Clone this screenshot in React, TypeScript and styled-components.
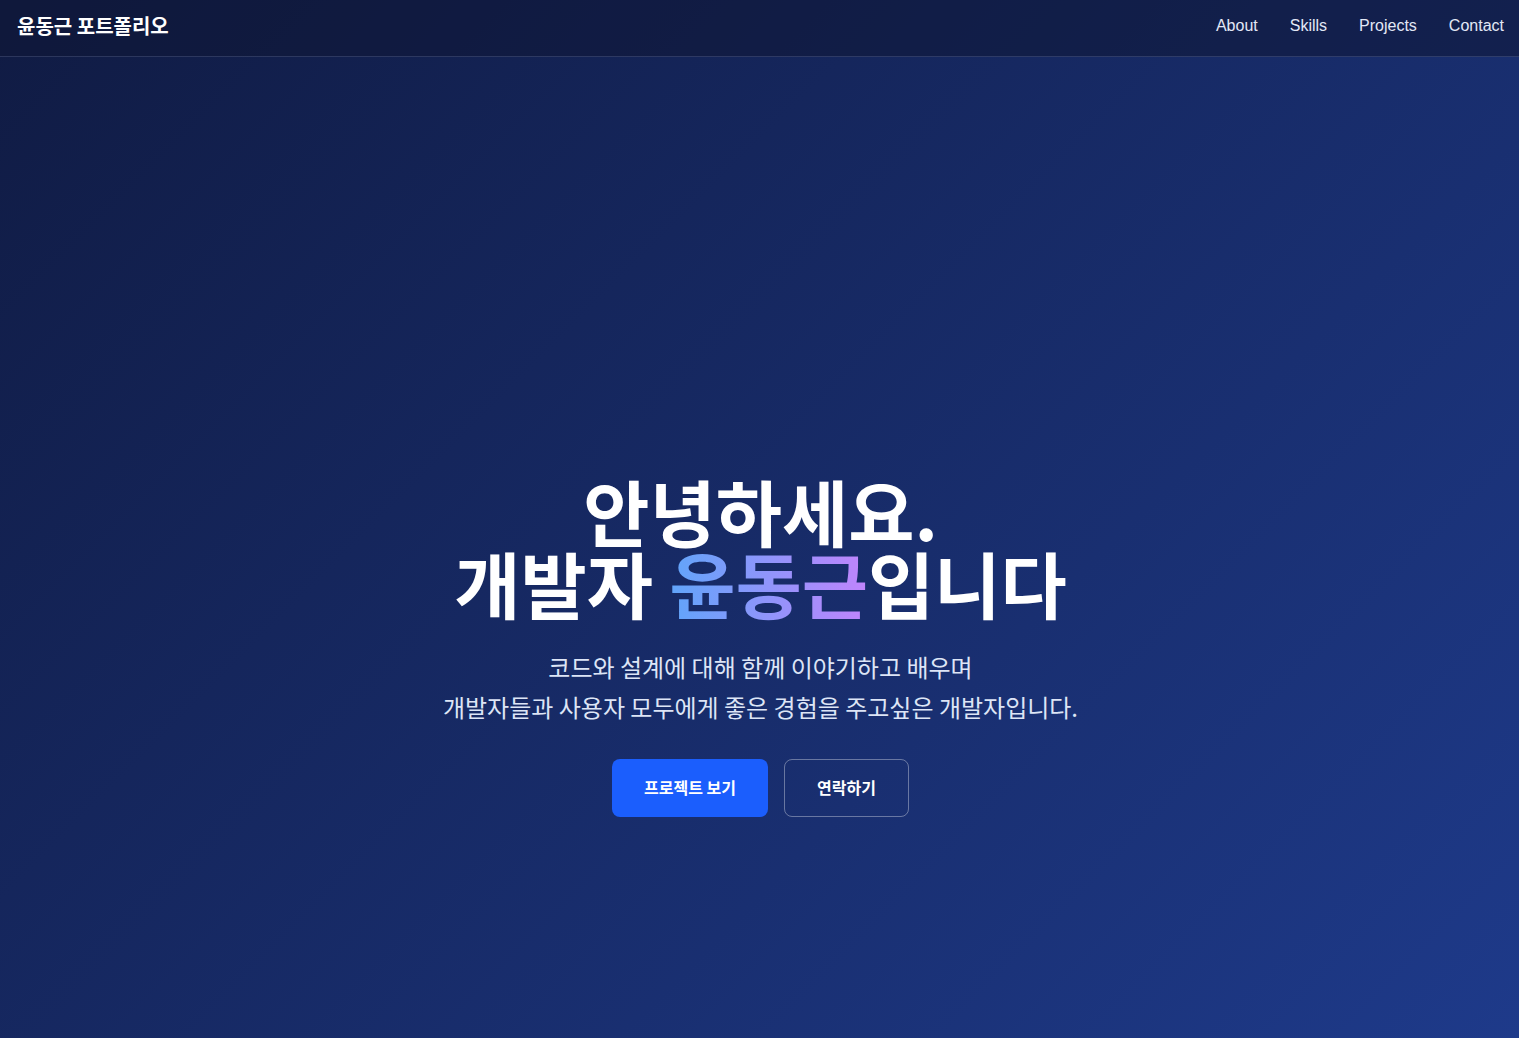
import React from "react";
import styled, { createGlobalStyle } from "styled-components";

const GlobalStyle = createGlobalStyle`
  html, body {
    margin: 0;
    padding: 0;
  }
  body {
    font-family: "Noto Sans CJK KR", "Noto Sans", sans-serif;
    background: #111c45;
  }
  * { box-sizing: border-box; }
`;

const Page = styled.div`
  min-height: 100vh;
  background: linear-gradient(135deg, #101b43 0%, #1e3a8a 100%);
  display: flex;
  flex-direction: column;
`;

const Header = styled.header`
  height: 57px;
  display: flex;
  align-items: center;
  justify-content: space-between;
  padding: 0 15px 5px 17px;
  background: rgba(14, 22, 52, 0.55);
  border-bottom: 1px solid rgba(148, 163, 210, 0.22);
`;

const Logo = styled.div`
  font-family: "Noto Sans CJK KR", sans-serif;
  font-weight: 700;
  font-size: 20px;
  color: #ffffff;
`;

const Nav = styled.nav`
  display: flex;
  gap: 32px;
`;

const NavLink = styled.a`
  font-family: "Liberation Sans", Arial, sans-serif;
  font-size: 16px;
  color: #e3e8f6;
  text-decoration: none;
  cursor: pointer;
`;

const Hero = styled.section`
  flex: 1;
  display: flex;
  flex-direction: column;
  align-items: center;
  padding-top: 417px;
  padding-left: 2px;
  text-align: center;
`;

const Title = styled.h1`
  margin: 0;
  font-family: "Noto Sans CJK KR", sans-serif;
  font-weight: 700;
  font-size: 72px;
  line-height: 72px;
  color: #ffffff;
`;

const Gradient = styled.span`
  background: linear-gradient(90deg, #60a5fa 0%, #c084fc 100%);
  -webkit-background-clip: text;
  background-clip: text;
  color: transparent;
`;

const Subtitle = styled.p`
  margin: 29px 0 0;
  font-family: "Noto Sans CJK KR", sans-serif;
  font-weight: 400;
  font-size: 24px;
  line-height: 40px;
  color: #dde5f6;
`;

const Actions = styled.div`
  display: flex;
  gap: 16px;
  margin-top: 32px;
`;

const Button = styled.button<{ $primary?: boolean }>`
  height: 58px;
  padding: 0 32px 3px;
  border-radius: 8px;
  font-family: "Noto Sans CJK KR", sans-serif;
  font-weight: 700;
  font-size: 16px;
  color: #ffffff;
  cursor: pointer;
  background: ${(p) => (p.$primary ? "#1b5efd" : "transparent")};
  border: ${(p) => (p.$primary ? "none" : "1px solid rgba(255,255,255,0.35)")};
`;

export default function App() {
  return (
    <>
      <GlobalStyle />
      <Page>
        <Header>
          <Logo>윤동근 포트폴리오</Logo>
          <Nav>
            <NavLink>About</NavLink>
            <NavLink>Skills</NavLink>
            <NavLink>Projects</NavLink>
            <NavLink>Contact</NavLink>
          </Nav>
        </Header>
        <Hero>
          <Title>
            안녕하세요.
            <br />
            개발자 <Gradient>윤동근</Gradient>입니다
          </Title>
          <Subtitle>
            코드와 설계에 대해 함께 이야기하고 배우며
            <br />
            개발자들과 사용자 모두에게 좋은 경험을 주고싶은 개발자입니다.
          </Subtitle>
          <Actions>
            <Button $primary>프로젝트 보기</Button>
            <Button>연락하기</Button>
          </Actions>
        </Hero>
      </Page>
    </>
  );
}
